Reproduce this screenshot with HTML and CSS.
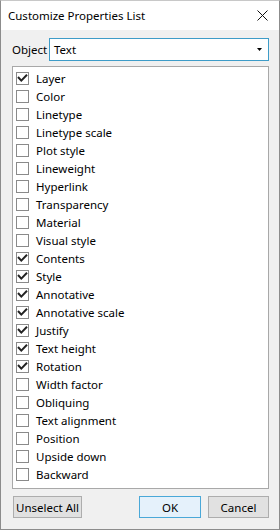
FILE: index.html
```html
<!DOCTYPE html>
<html>
<head>
<meta charset="utf-8">
<link rel="stylesheet" href="styles.css">
</head>
<body>
<div class="window">
  <div class="titlebar">
    <span class="title">Customize Properties List</span>
    <svg class="close" width="11" height="11" viewBox="0 0 11 11"><path d="M0.5 0.5L10.5 10.5M10.5 0.5L0.5 10.5" stroke="#111" stroke-width="1" fill="none"/></svg>
  </div>
  <div class="content">
    <div class="object-row">
      <span class="label">Object</span>
      <div class="combo">
        <span class="combo-text">Text</span>
        <svg class="arrow" width="5" height="3" viewBox="0 0 5 3"><path d="M0 0H5L2.5 3Z" fill="#000"/></svg>
      </div>
    </div>
    <div class="list">
      <div class="row"><span class="cb on"><svg width="11" height="11" viewBox="0 0 11 11"><path d="M1 4L4.3 7.6L10 1.8" stroke="#222" stroke-width="2" fill="none"/></svg></span>Layer</div>
      <div class="row"><span class="cb"></span>Color</div>
      <div class="row"><span class="cb"></span>Linetype</div>
      <div class="row"><span class="cb"></span>Linetype scale</div>
      <div class="row"><span class="cb"></span>Plot style</div>
      <div class="row"><span class="cb"></span>Lineweight</div>
      <div class="row"><span class="cb"></span>Hyperlink</div>
      <div class="row"><span class="cb"></span>Transparency</div>
      <div class="row"><span class="cb"></span>Material</div>
      <div class="row"><span class="cb"></span>Visual style</div>
      <div class="row"><span class="cb on"><svg width="11" height="11" viewBox="0 0 11 11"><path d="M1 4L4.3 7.6L10 1.8" stroke="#222" stroke-width="2" fill="none"/></svg></span>Contents</div>
      <div class="row"><span class="cb on"><svg width="11" height="11" viewBox="0 0 11 11"><path d="M1 4L4.3 7.6L10 1.8" stroke="#222" stroke-width="2" fill="none"/></svg></span>Style</div>
      <div class="row"><span class="cb on"><svg width="11" height="11" viewBox="0 0 11 11"><path d="M1 4L4.3 7.6L10 1.8" stroke="#222" stroke-width="2" fill="none"/></svg></span>Annotative</div>
      <div class="row"><span class="cb on"><svg width="11" height="11" viewBox="0 0 11 11"><path d="M1 4L4.3 7.6L10 1.8" stroke="#222" stroke-width="2" fill="none"/></svg></span>Annotative scale</div>
      <div class="row"><span class="cb on"><svg width="11" height="11" viewBox="0 0 11 11"><path d="M1 4L4.3 7.6L10 1.8" stroke="#222" stroke-width="2" fill="none"/></svg></span>Justify</div>
      <div class="row"><span class="cb on"><svg width="11" height="11" viewBox="0 0 11 11"><path d="M1 4L4.3 7.6L10 1.8" stroke="#222" stroke-width="2" fill="none"/></svg></span>Text height</div>
      <div class="row"><span class="cb on"><svg width="11" height="11" viewBox="0 0 11 11"><path d="M1 4L4.3 7.6L10 1.8" stroke="#222" stroke-width="2" fill="none"/></svg></span>Rotation</div>
      <div class="row"><span class="cb"></span>Width factor</div>
      <div class="row"><span class="cb"></span>Obliquing</div>
      <div class="row"><span class="cb"></span>Text alignment</div>
      <div class="row"><span class="cb"></span>Position</div>
      <div class="row"><span class="cb"></span>Upside down</div>
      <div class="row"><span class="cb"></span>Backward</div>
    </div>
    <div class="buttons">
      <button class="btn unselect">Unselect All</button>
      <div class="spacer"></div>
      <button class="btn default">OK</button>
      <button class="btn cancel">Cancel</button>
    </div>
  </div>
</div>
</body>
</html>
```
FILE: styles.css
```css
html, body {
  margin: 0;
  padding: 0;
  background: #f0f0f0;
}
.window {
  width: 280px;
  height: 530px;
  box-sizing: border-box;
  border: 1px solid #8c8c8c;
  border-top-color: #c8c8c8;
  background: #f0f0f0;
  font-family: "Noto Sans", sans-serif;
  font-size: 11.5px;
  color: #000;
}
.titlebar {
  height: 29px;
  background: #fff;
  display: flex;
  align-items: center;
  justify-content: space-between;
  padding: 0 11px 0 7px;
}
.title {
  font-size: 11.5px;
  padding-bottom: 1px;
}
.close {
  display: block;
}
.content {
  padding: 8px 10px 0 11px;
}
.object-row {
  display: flex;
  align-items: center;
  height: 23px;
}
.label {
  width: 37px;
}
.combo {
  flex: 1;
  height: 23px;
  box-sizing: border-box;
  border: 1px solid #3e9cc8;
  background: #fff;
  display: flex;
  align-items: center;
  justify-content: space-between;
  padding: 0 6px 0 4px;
}
.arrow {
  display: block;
}
.list {
  margin-top: 5px;
  height: 423px;
  box-sizing: border-box;
  border: 1px solid #a8a8a8;
  background: #fff;
  padding: 2px 3px;
}
.row {
  height: 18px;
  display: flex;
  align-items: center;
}
.cb {
  width: 13px;
  height: 13px;
  box-sizing: border-box;
  border: 1px solid #8a8a8a;
  background: #fff;
  margin-right: 7px;
  display: flex;
  align-items: center;
  justify-content: center;
}
.cb svg {
  display: block;
}
.buttons {
  margin-top: 7px;
  display: flex;
  gap: 7px;
}
.spacer {
  flex: 1;
}
.btn {
  height: 22px;
  box-sizing: border-box;
  border: 1px solid #adadad;
  background: #e1e1e1;
  font-family: inherit;
  font-size: 11.5px;
  color: #000;
  padding: 0;
  margin: 0;
}
.unselect {
  width: 69px;
  margin-left: 1px;
}
.default {
  width: 62px;
  border-color: #4aa8d8;
  background: #e5f1fb;
}
.cancel {
  width: 61px;
}
```
